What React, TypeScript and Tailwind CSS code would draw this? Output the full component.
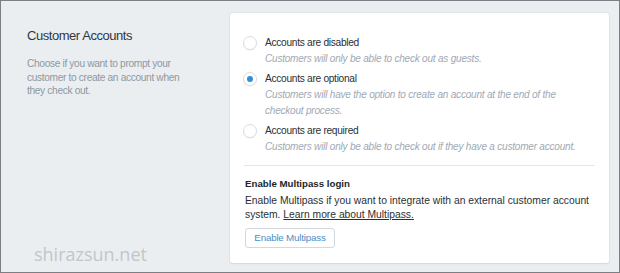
import React from 'react';

const options = [
  {
    label: 'Accounts are disabled',
    desc: 'Customers will only be able to check out as guests.',
    checked: false,
  },
  {
    label: 'Accounts are optional',
    desc: 'Customers will have the option to create an account at the end of the checkout process.',
    checked: true,
  },
  {
    label: 'Accounts are required',
    desc: 'Customers will only be able to check out if they have a customer account.',
    checked: false,
  },
];

function Radio({ checked }: { checked: boolean }) {
  return (
    <span className="w-[14px] h-[14px] rounded-full border border-[#d8dde2] bg-white flex items-center justify-center shrink-0 shadow-[0_1px_1px_rgba(0,0,0,0.04)]">
      {checked && <span className="w-[6px] h-[6px] rounded-full bg-[#2f8fd8]" />}
    </span>
  );
}

export default function App() {
  return (
    <div
      className="w-[620px] h-[273px] border border-[#7c8085] bg-[#ebeef1] flex relative overflow-hidden"
      style={{ fontFamily: '"Liberation Sans", Arial, sans-serif' }}
    >
      {/* Left description */}
      <div className="w-[229px] pl-[26px] pt-[27px]">
        <h2 className="text-[13px] leading-[16px] tracking-[-0.45px] text-[#31373d]">Customer Accounts</h2>
        <p className="mt-[13px] text-[10.2px] leading-[13.5px] tracking-[-0.35px] text-[#8e98a3] w-[166px]">
          Choose if you want to prompt your customer to create an account when they check out.
        </p>
      </div>

      {/* Card */}
      <div className="mt-[12px] w-[379px] h-[250px] bg-white rounded-[3px] shadow-[0_0_0_1px_rgba(0,0,0,0.03),0_1px_2px_rgba(0,0,0,0.06)] pl-[13px] pr-[14px] pt-[23px]">
        <div className="flex flex-col gap-[5px]">
          {options.map((o) => (
            <div key={o.label}>
              <div className="flex items-center gap-[8px] h-[14px]">
                <Radio checked={o.checked} />
                <span className="text-[10.2px] leading-[14px] tracking-[-0.3px] text-[#2b2f33]">{o.label}</span>
              </div>
              <p className="pl-[22px] mt-[1px] text-[10px] leading-[16px] tracking-[-0.2px] italic text-[#9ea9b5]">{o.desc}</p>
            </div>
          ))}
        </div>

        <div className="mt-[10px] ml-[1px] border-t border-[#e3e6e9]" />

        <div className="pl-[2px] pt-[11px]">
          <h3 className="text-[9.7px] leading-[14px] font-bold text-[#222629]">Enable Multipass login</h3>
          <p className="mt-[3px] text-[10.3px] leading-[13.5px] text-[#2b2f33]">
            Enable Multipass if you want to integrate with an external customer account system.{' '}
            <a className="underline text-[#2b2f33]">Learn more about Multipass.</a>
          </p>
          <button className="mt-[7px] h-[20px] w-[90px] border border-[#d3d8dd] rounded-[3px] bg-white text-[9.8px] leading-[18px] tracking-[-0.2px] text-[#4a8fc8] flex items-center justify-center">
            Enable Multipass
          </button>
        </div>
      </div>

      <span
        className="absolute left-[33px] top-[243px] text-[18px] leading-[20px] text-[#c3c6c9]"
        style={{ fontFamily: '"Open Sans", sans-serif' }}
      >
        shirazsun.net
      </span>
    </div>
  );
}
